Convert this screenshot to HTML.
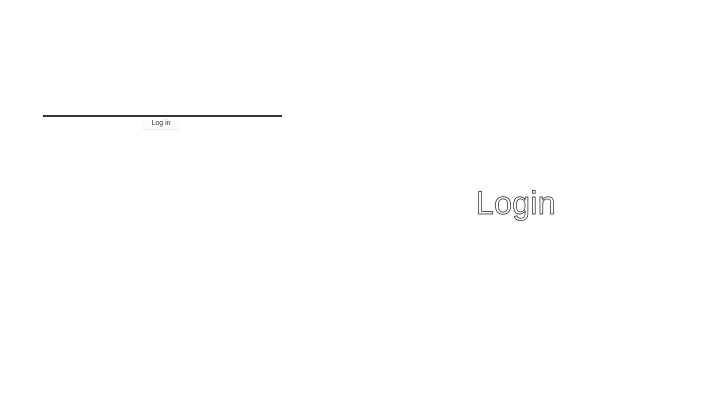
<!DOCTYPE html>
<html><head><style>
html,body{margin:0;padding:0;width:720px;height:405px;background:#fff;overflow:hidden;font-family:"Liberation Sans",sans-serif}
.line{position:absolute;left:43px;top:115px;width:239px;height:2px;background:#333}
.btn{position:absolute;left:143px;top:119px;width:36px;height:10px;background:#fcfcfc;border-radius:2px;box-shadow:0 1px 1px #e6e6e6;font-size:7px;line-height:10px;text-align:center;color:#333}
.big{position:absolute;left:476px;top:183px;font-size:32px;line-height:40px;color:#fff;-webkit-text-stroke:0.7px #222;letter-spacing:0.3px}
</style></head><body>
<div class="line"></div>
<div class="btn">Log in</div>
<div class="big">Login</div>
</body></html>
